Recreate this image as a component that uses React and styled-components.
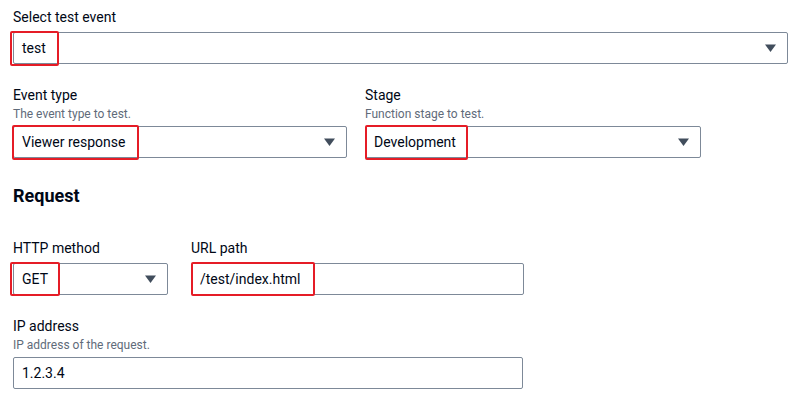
import React from 'react';
import styled, { createGlobalStyle } from 'styled-components';

const GlobalStyle = createGlobalStyle`
    body {
        margin: 0;
        background: #ffffff;
        font-family: Roboto, "Open Sans", Arial, sans-serif;
        color: #000716;
    }
`;

const Page = styled.div`
    padding: 6px 0 0 13px;
    display: flex;
    flex-direction: column;
`;

const Field = styled.div`
    display: flex;
    flex-direction: column;
    width: ${p => p.width}px;
    margin-top: ${p => p.top || 0}px;
`;

const Label = styled.div`
    font-size: 14px;
    line-height: 22px;
    color: #000716;
`;

const Description = styled.div`
    font-size: 12px;
    line-height: 16px;
    color: #5f6b7a;
`;

const Control = styled.div`
    position: relative;
    margin-top: 4px;
    height: 32px;
    box-sizing: border-box;
    border: 1px solid #7d8998;
    border-radius: 2px;
    display: flex;
    align-items: center;
    justify-content: space-between;
    padding: 0 11px 0 8px;
    font-size: 14px;
    color: #000716;
`;

const Arrow = styled.svg`
    width: 11px;
    height: 8px;
    fill: #414d5c;
    flex-shrink: 0;
`;

// red annotation drawn over the chosen value
const Mark = styled.span`
    position: absolute;
    left: ${p => p.left}px;
    top: ${p => p.top}px;
    bottom: ${p => p.bottom}px;
    width: ${p => p.width}px;
    box-sizing: border-box;
    border: 2.5px solid #e51c26;
    border-radius: 2px;
`;

const Row = styled.div`
    display: flex;
    flex-direction: row;
    gap: ${p => p.gap}px;
    margin-top: ${p => p.top || 0}px;
`;

const Heading = styled.h2`
    margin: 27px 0 0 0;
    font-size: 18px;
    line-height: 22px;
    font-weight: 700;
    color: #000716;
`;

const Select = ({ value, mark }) => (
    <Control>
        <span>{value}</span>
        <Arrow viewBox="0 0 11 8"><path d="M0 0.5 L11 0.5 L5.5 8 Z" /></Arrow>
        {mark && <Mark {...mark} />}
    </Control>
);

const Input = ({ value, mark }) => (
    <Control>
        <span>{value}</span>
        {mark && <Mark {...mark} />}
    </Control>
);

function App(){
    return(
        <Page>
            <GlobalStyle />
            <Field width={775}>
                <Label>Select test event</Label>
                <Select value="test" mark={{ left: -4, top: -2, bottom: -3, width: 49 }} />
            </Field>

            <Row gap={18} top={20}>
                <Field width={334}>
                    <Label>Event type</Label>
                    <Description>The event type to test.</Description>
                    <Select value="Viewer response" mark={{ left: -2, top: -2, bottom: -3, width: 127 }} />
                </Field>
                <Field width={336}>
                    <Label>Stage</Label>
                    <Description>Function stage to test.</Description>
                    <Select value="Development" mark={{ left: -1, top: -2, bottom: -3, width: 103 }} />
                </Field>
            </Row>

            <Heading>Request</Heading>

            <Row gap={23} top={30}>
                <Field width={155}>
                    <Label>HTTP method</Label>
                    <Select value="GET" mark={{ left: -4, top: -2, bottom: -2, width: 50 }} />
                </Field>
                <Field width={333}>
                    <Label>URL path</Label>
                    <Input value="/test/index.html" mark={{ left: -1, top: -2, bottom: -2, width: 124 }} />
                </Field>
            </Row>

            <Field width={510} top={20}>
                <Label>IP address</Label>
                <Description>IP address of the request.</Description>
                <Input value="1.2.3.4" />
            </Field>
        </Page>
    )
}

export default App;
